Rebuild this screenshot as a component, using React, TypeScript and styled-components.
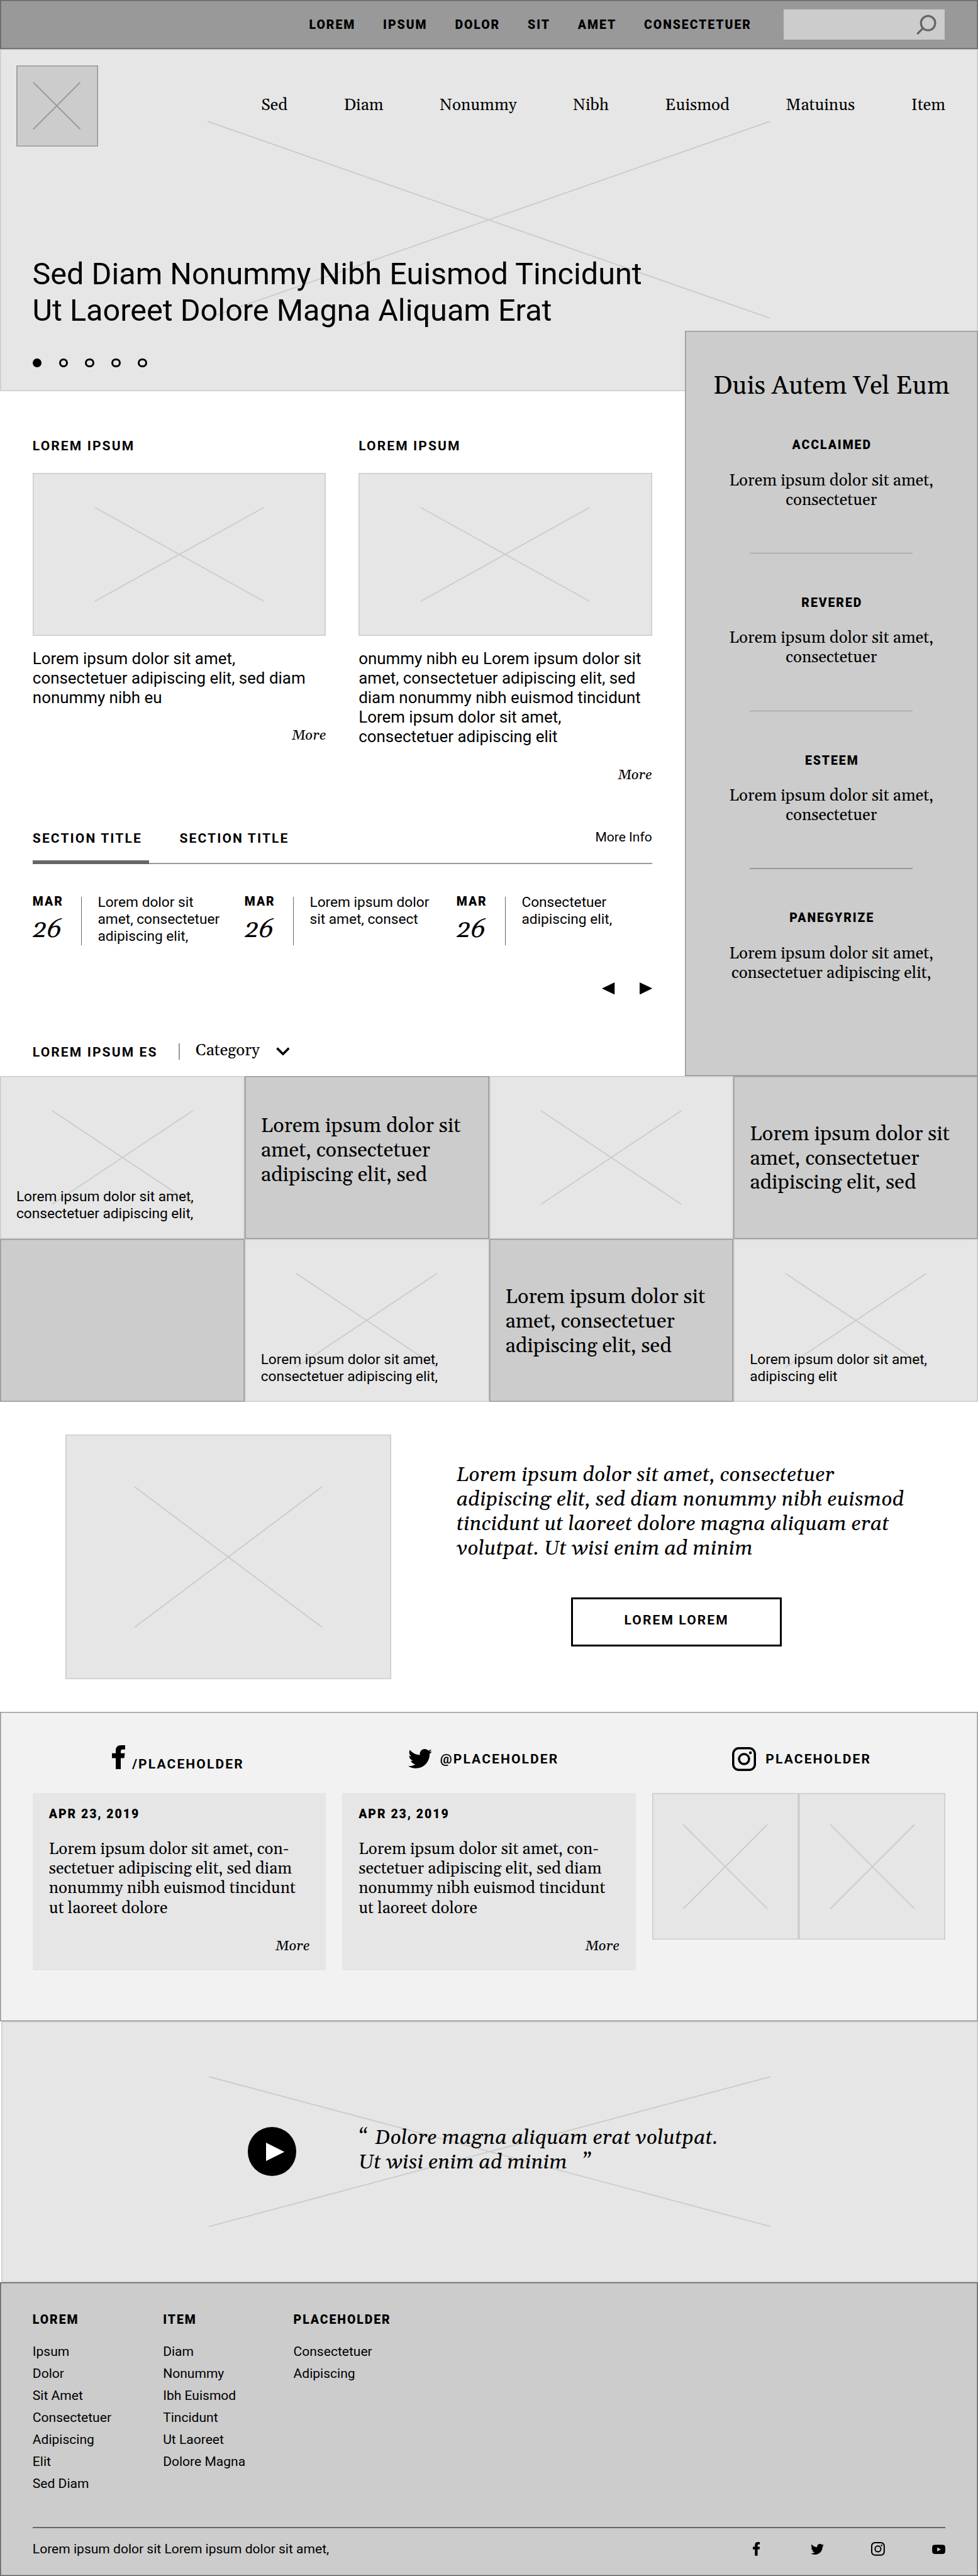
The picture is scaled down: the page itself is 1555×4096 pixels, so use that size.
import React from 'react';
import styled, { createGlobalStyle, css } from 'styled-components';

/* The design is drawn on a 1920 grid; u() converts grid units to screen pixels. */
const SCALE = 0.81;
const u = (n: number) => `${+(n * SCALE).toFixed(2)}px`;

const sans = 'Roboto, "Liberation Sans", sans-serif';
const serif = 'Gelasio, Georgia, "Liberation Serif", serif';

const c = {
  ink: '#000',
  dark: '#666',
  mid: '#999',
  gray: '#ccc',
  light: '#e6e6e6',
  pale: '#f2f2f2',
};

const GlobalStyle = createGlobalStyle`
  *, *::before, *::after { box-sizing: border-box; }
  body { margin: 0; background: #fff; color: ${c.ink}; }
  p, h1, h2, h3, ul { margin: 0; padding: 0; font-weight: normal; }
  ul { list-style: none; }
`;

const edge = (color: string) => css`
  box-shadow: inset 0 0 0 ${u(2)} ${color};
`;

/* ---------- shared type ---------- */

const Label = styled.h3`
  height: ${u(28)};
  padding-top: ${u(1.2)};
  font: 900 ${u(24)} / ${u(28)} ${sans};
  letter-spacing: 0.1em;
  white-space: nowrap;
`;

const Heading = styled.h2`
  font: 700 ${u(26)} / ${u(30)} ${sans};
  letter-spacing: 0.1em;
  white-space: nowrap;
`;

const SerifText = styled.p`
  padding-top: ${u(2)};
  font: ${u(32)} / ${u(38.4)} ${serif};
  white-space: nowrap;
`;

const SmallText = styled.p`
  font: ${u(28)} / ${u(33.6)} ${sans};
  white-space: nowrap;
`;

const More = styled.a`
  display: block;
  margin-top: ${u(38.4)};
  font: italic ${u(28)} / ${u(34)} ${serif};
  text-align: right;
`;

const Lines = ({ of }: { of: string[] }) => (
  <>
    {of.map((line, i) => (
      <React.Fragment key={i}>
        {i > 0 && <br />}
        {line}
      </React.Fragment>
    ))}
  </>
);

/* ---------- image placeholder ---------- */

const CrossSvg = styled.svg`
  position: absolute;
  left: 21.25%;
  top: 21.25%;
  width: 57.5%;
  height: 57.5%;
  overflow: visible;
`;

const Cross = ({ color = c.gray }: { color?: string }) => (
  <CrossSvg viewBox="0 0 100 100" preserveAspectRatio="none" aria-hidden>
    <path
      d="M0 0L100 100M100 0L0 100"
      fill="none"
      stroke={color}
      strokeWidth={1.9}
      vectorEffect="non-scaling-stroke"
    />
  </CrossSvg>
);

const Picture = styled.div<{ $w: number; $h: number }>`
  position: relative;
  flex: none;
  width: ${p => u(p.$w)};
  height: ${p => u(p.$h)};
  background: ${c.light};
  ${edge(c.gray)}
`;

/* ---------- page ---------- */

const Page = styled.div`
  width: 1555px;
  height: 4096px;
  overflow: hidden;
  display: flex;
  flex-direction: column;
`;

const TopBar = styled.div`
  flex: none;
  height: ${u(96)};
  display: flex;
  align-items: center;
  justify-content: flex-end;
  gap: ${u(54.2)};
  padding: 0 ${u(66)} 0 0;
  background: ${c.mid};
  ${edge(c.dark)}
`;

const SearchBox = styled.div`
  display: flex;
  justify-content: flex-end;
  margin-left: ${u(8.5)};
  width: ${u(316)};
  height: ${u(60)};
  padding: ${u(10)} ${u(15)};
  background: ${c.gray};
`;

const Hero = styled.header`
  position: relative;
  flex: none;
  height: ${u(672)};
  background: ${c.light};
  ${edge(c.gray)}
`;

const HeroHead = styled.div`
  position: relative;
  display: flex;
  justify-content: space-between;
  padding: ${u(32)} ${u(64)} 0 ${u(32)};
`;

const Logo = styled.div`
  position: relative;
  width: ${u(160)};
  height: ${u(160)};
  background: ${c.gray};
  ${edge(c.mid)}
`;

const Nav = styled.nav`
  display: flex;
  gap: ${u(110.5)};
  padding-top: ${u(61)};
  font: ${u(32)} / ${u(38)} ${serif};
`;

const HeroTitle = styled.h1`
  position: relative;
  margin: ${u(214)} 0 0 ${u(63.5)};
  font: ${u(60)} / ${u(72)} ${sans};
`;

const Dots = styled.div`
  position: relative;
  display: flex;
  gap: ${u(33.6)};
  margin: ${u(57.5)} 0 0 ${u(64)};
`;

const Dot = styled.span<{ $on?: boolean }>`
  width: ${u(18)};
  height: ${u(18)};
  border: 3px solid ${c.ink};
  border-radius: 50%;
  background: ${p => (p.$on ? c.ink : 'transparent')};
`;

const Body = styled.div`
  flex: none;
  display: flex;
  height: ${u(1344)};
`;

const Main = styled.main`
  width: ${u(1344)};
  padding: 0 ${u(64)};
`;

const Aside = styled.aside`
  position: relative;
  flex: 1;
  margin-top: ${u(-118)};
  padding-top: ${u(79.8)};
  display: flex;
  flex-direction: column;
  align-items: center;
  text-align: center;
  background: ${c.gray};
  ${edge(c.mid)}
`;

const AsideTitle = styled.h2`
  margin-bottom: ${u(71.7)};
  font: ${u(50)} / ${u(58)} ${serif};
  white-space: nowrap;
`;

const Praise = styled.section`
  & > ${Label} {
    padding-left: 0.1em;
    margin-bottom: ${u(34.8)};
  }
  &:not(:last-child)::after {
    content: '';
    display: block;
    width: ${u(320)};
    height: ${u(2)};
    margin: ${u(84)} auto ${u(82)};
    background: ${c.mid};
  }
`;

const Articles = styled.div`
  display: flex;
  gap: ${u(64)};
  padding-top: ${u(92)};
  height: ${u(863)};
`;

const Article = styled.article`
  width: ${u(576)};
  & > ${Heading} {
    margin-bottom: ${u(38)};
  }
`;

const ArticleText = styled.p`
  margin-top: ${u(26.2)};
  font: ${u(32)} / ${u(38.4)} ${sans};
  white-space: nowrap;
`;

const Tabs = styled.div`
  display: flex;
  height: ${u(65)};
  border-bottom: 2px solid ${c.mid};
`;

const Tab = styled(Heading)<{ $active?: boolean }>`
  width: ${u(228)};
  margin: 0 ${u(60.5)} -2px 0;
  border-bottom: ${u(8)} solid ${p => (p.$active ? c.dark : 'transparent')};
`;

const TabLink = styled.a`
  margin: ${u(-3)} 0 0 auto;
  font: ${u(26)} / ${u(30)} ${sans};
`;

const Events = styled.div`
  display: grid;
  grid-template-columns: repeat(3, ${u(416)});
  height: ${u(102)};
  margin-top: ${u(58)};
`;

const Event = styled.div`
  display: flex;
`;

const EventDate = styled.div`
  width: ${u(95)};
  padding-top: ${u(2)};
`;

const Day = styled.div`
  width: ${u(60)};
  margin-top: ${u(12)};
  font: italic ${u(50)} / ${u(58)} ${serif};
  transform: skewX(-8deg);
`;

const Rule = styled.span<{ $color: string; $h: number }>`
  flex: none;
  width: ${u(2)};
  height: ${p => u(p.$h)};
  background: ${p => p.$color};
`;

const EventRule = styled(Rule)`
  margin: ${u(6)} ${u(31)} 0 0;
`;

const Pager = styled.div`
  display: flex;
  justify-content: flex-end;
  gap: ${u(48)};
  margin-top: ${u(72)};
`;

const Filter = styled.div`
  display: flex;
  align-items: center;
  height: ${u(32)};
  margin-top: ${u(96)};
  & > ${Heading} {
    width: ${u(287)};
    padding-top: ${u(2.5)};
  }
  & > ${SerifText} {
    margin: ${u(-4)} ${u(32)} 0 ${u(31)};
  }
`;

const TileGrid = styled.div`
  flex: none;
  display: grid;
  grid-template-columns: repeat(4, 1fr);
  grid-auto-rows: ${u(320)};
`;

const PhotoTile = styled.div`
  position: relative;
  display: flex;
  align-items: flex-end;
  padding: ${u(33)} ${u(32)};
  background: ${c.light};
  ${edge(c.gray)}
  & > p {
    position: relative;
  }
`;

const QuoteTile = styled.div<{ $lift?: number }>`
  display: flex;
  align-items: center;
  padding: ${u(6.8)} ${u(32)} ${p => u((p.$lift ?? 0) * 2)};
  font: ${u(40)} / ${u(48)} ${serif};
  background: ${c.gray};
  white-space: nowrap;
  ${edge(c.mid)}
`;

const Promo = styled.section`
  flex: none;
  display: flex;
  gap: ${u(128)};
  height: ${u(608)};
  padding: ${u(64)} ${u(128)};
`;

const PromoCopy = styled.div`
  width: ${u(864)};
  padding-top: ${u(57.4)};
`;

const BigItalic = styled.p`
  font: italic ${u(40)} / ${u(48)} ${serif};
  white-space: nowrap;
`;

const Button = styled.button`
  display: block;
  width: ${u(414)};
  height: ${u(96)};
  margin: ${u(70.6)} auto 0;
  padding: 0 0 ${u(7)};
  border: 3px solid ${c.ink};
  background: #fff;
  color: ${c.ink};
  font: 700 ${u(26)} / ${u(30)} ${sans};
  letter-spacing: 0.1em;
`;

const Social = styled.section`
  flex: none;
  display: grid;
  grid-template-columns: repeat(3, ${u(576)});
  column-gap: ${u(32)};
  align-items: start;
  height: ${u(608)};
  padding: 0 ${u(64)};
  background: ${c.pale};
  ${edge(c.mid)}
`;

const SocialHead = styled.div<{ $indent: number; $gap: number }>`
  display: flex;
  align-items: center;
  gap: ${p => u(p.$gap)};
  height: ${u(66)};
  margin: ${u(60)} 0 ${u(34)};
  padding-left: ${p => u(p.$indent)};
`;

const LowHeading = styled(Heading)`
  margin-top: ${u(21)};
`;

const RaisedIcon = styled.span`
  display: flex;
  margin-bottom: ${u(7)};
`;

const Card = styled.div<{ $drop?: number }>`
  height: ${u(348)};
  margin-top: ${p => u(p.$drop ?? 0)};
  padding: ${u(27.6)} ${u(32)} 0;
  background: ${c.light};
  & > ${Label} {
    margin-bottom: ${u(34)};
  }
`;

const Photos = styled.div`
  display: flex;
`;

const Video = styled.section`
  position: relative;
  flex: none;
  display: flex;
  gap: ${u(121.5)};
  height: ${u(512)};
  margin-left: ${u(2)};
  padding: ${u(208)} 0 0 ${u(484)};
  background: ${c.light};
  ${edge(c.gray)}
  & > ${BigItalic} {
    position: relative;
    margin-top: ${u(-1.6)};
  }
`;

const Play = styled.span`
  position: relative;
  display: flex;
  align-items: center;
  justify-content: center;
  width: ${u(96)};
  height: ${u(96)};
  padding-left: ${u(12)};
  border-radius: 50%;
  background: ${c.ink};
`;

const OpenQuote = styled.span`
  display: inline-block;
  width: ${u(32.5)};
`;

const CloseQuote = styled.span`
  margin-left: ${u(29)};
`;

const Footer = styled.footer`
  flex: 1;
  padding: ${u(59.4)} ${u(64)} 0;
  background: ${c.gray};
  ${edge(c.dark)}
`;

const FooterColumns = styled.div`
  display: grid;
  grid-template-columns: repeat(3, ${u(256)});
  height: ${u(421)};
`;

const FooterList = styled.ul`
  margin-top: ${u(28)};
  font: ${u(26)} / ${u(43.2)} ${sans};
`;

const FooterBase = styled.div`
  display: flex;
  align-items: center;
  justify-content: space-between;
  border-top: 2px solid ${c.dark};
  height: ${u(88)};
  padding-bottom: ${u(3)};
  font: ${u(26)} / ${u(30)} ${sans};
`;

const FooterIcons = styled.div`
  display: flex;
  align-items: center;
  gap: ${u(93)};
  & > :first-child {
    margin-right: ${u(6)};
  }
`;

/* ---------- icons ---------- */

type IconProps = { w: number; h: number };
const px = (n: number) => +(n * SCALE).toFixed(2);

const SearchIcon = () => (
  <svg width={px(40)} height={px(40)} viewBox="0 0 40 40" fill="none" stroke={c.dark} strokeWidth={4}>
    <circle cx="23" cy="17" r="14" />
    <path d="M13 27L1.6 38.6" />
  </svg>
);

const FacebookIcon = ({ w, h }: IconProps) => (
  <svg width={px(w)} height={px(h)} viewBox="0 0 42 80" preserveAspectRatio="none">
    <path d="M12 80V43H0V27H12V18C12 6 18 0 29 0H42V14H34C29 14 28 17 28 21V27H41L39 43H28V80Z" />
  </svg>
);

const TwitterIcon = ({ w, h }: IconProps) => (
  <svg width={px(w)} height={px(h)} viewBox="0 48 512 416">
    <path d="M459.37 151.716c.325 4.548.325 9.097.325 13.645 0 138.72-105.583 298.558-298.558 298.558-59.452 0-114.68-17.219-161.137-47.106 8.447.974 16.568 1.299 25.34 1.299 49.055 0 94.213-16.568 130.274-44.832-46.132-.975-84.792-31.188-98.112-72.772 6.498.974 12.995 1.624 19.818 1.624 9.421 0 18.843-1.3 27.614-3.573-48.081-9.747-84.143-51.98-84.143-102.985v-1.299c13.969 7.797 30.214 12.67 47.431 13.319-28.264-18.843-46.781-51.005-46.781-87.391 0-19.492 5.197-37.36 14.294-52.954 51.655 63.675 129.3 105.258 216.365 109.807-1.624-7.797-2.599-15.918-2.599-24.04 0-57.828 46.782-104.934 104.934-104.934 30.213 0 57.502 12.67 76.67 33.137 23.715-4.548 46.456-13.32 66.599-25.34-7.798 24.366-24.366 44.833-46.132 57.827 21.117-2.273 41.584-8.122 60.426-16.243-14.292 20.791-32.161 39.308-52.628 54.253z" />
  </svg>
);

const InstagramIcon = ({ w, h }: IconProps) => (
  <svg width={px(w)} height={px(h)} viewBox="0 0 80 80" fill="none" stroke={c.ink} strokeWidth={7.4}>
    <rect x="3.7" y="3.7" width="72.6" height="72.6" rx="19" />
    <circle cx="40" cy="40" r="16.8" />
    <circle cx="61.2" cy="19" r="4.8" fill={c.ink} stroke="none" />
  </svg>
);

const YoutubeIcon = ({ w, h }: IconProps) => (
  <svg width={px(w)} height={px(h)} viewBox="0 0 78 56">
    <path
      fillRule="evenodd"
      d="M11 1.5Q39 -1 67 1.5Q75.500 2.500 76.500 10Q79 28 76.500 46Q75.500 53.500 67 54.500Q39 57 11 54.500Q2.500 53.500 1.500 46Q-1 28 1.500 10Q2.500 2.500 11 1.500ZM30 16V40L52 28Z"
    />
  </svg>
);

const Triangle = ({ dir, w, h, color = c.ink }: IconProps & { dir: 'left' | 'right'; color?: string }) => (
  <svg width={px(w)} height={px(h)} viewBox="0 0 10 10" preserveAspectRatio="none" fill={color}>
    <path d={dir === 'left' ? 'M10 0V10L0 5Z' : 'M0 0V10L10 5Z'} />
  </svg>
);

const Chevron = () => (
  <svg width={px(27)} height={px(17)} viewBox="0 0 27 17" fill="none" stroke={c.ink} strokeWidth={4.4}>
    <path d="M1.8 2L13.500 13.500L25.200 2" />
  </svg>
);

/* ---------- content ---------- */

const topLinks = ['LOREM', 'IPSUM', 'DOLOR', 'SIT', 'AMET', 'CONSECTETUER'];
const navLinks = ['Sed', 'Diam', 'Nonummy', 'Nibh', 'Euismod', 'Matuinus', 'Item'];

const praise = [
  { title: 'ACCLAIMED', text: ['Lorem ipsum dolor sit amet,', 'consectetuer'] },
  { title: 'REVERED', text: ['Lorem ipsum dolor sit amet,', 'consectetuer'] },
  { title: 'ESTEEM', text: ['Lorem ipsum dolor sit amet,', 'consectetuer'] },
  { title: 'PANEGYRIZE', text: ['Lorem ipsum dolor sit amet,', 'consectetuer adipiscing elit,'] },
];

const articles = [
  ['Lorem ipsum dolor sit amet,', 'consectetuer adipiscing elit, sed diam', 'nonummy nibh eu'],
  [
    'onummy nibh eu Lorem ipsum dolor sit',
    'amet, consectetuer adipiscing elit, sed',
    'diam nonummy nibh euismod tincidunt',
    'Lorem ipsum dolor sit amet,',
    'consectetuer adipiscing elit',
  ],
];

const events = [
  ['Lorem dolor sit', 'amet, consectetuer', 'adipiscing elit,'],
  ['Lorem ipsum dolor', 'sit amet, consect'],
  ['Consectetuer', 'adipiscing elit,'],
];

const caption = ['Lorem ipsum dolor sit amet,', 'consectetuer adipiscing elit,'];
const quote = ['Lorem ipsum dolor sit', 'amet, consectetuer', 'adipiscing elit, sed'];

const tiles: { kind: 'photo' | 'quote'; text?: string[]; lift?: number }[] = [
  { kind: 'photo', text: caption },
  { kind: 'quote', text: quote, lift: 15.5 },
  { kind: 'photo' },
  { kind: 'quote', text: quote },
  { kind: 'quote' },
  { kind: 'photo', text: caption },
  { kind: 'quote', text: quote },
  { kind: 'photo', text: ['Lorem ipsum dolor sit amet,', 'adipiscing elit'] },
];

const post = [
  'Lorem ipsum dolor sit amet, con-',
  'sectetuer adipiscing elit, sed diam',
  'nonummy nibh euismod tincidunt',
  'ut laoreet dolore',
];

const footerColumns = [
  { title: 'LOREM', items: ['Ipsum', 'Dolor', 'Sit Amet', 'Consectetuer', 'Adipiscing', 'Elit', 'Sed Diam'] },
  { title: 'ITEM', items: ['Diam', 'Nonummy', 'Ibh Euismod', 'Tincidunt', 'Ut Laoreet', 'Dolore Magna'] },
  { title: 'PLACEHOLDER', items: ['Consectetuer', 'Adipiscing'] },
];

const PostCard = ({ drop }: { drop?: number }) => (
  <Card $drop={drop}>
    <Label>APR 23, 2019</Label>
    <SerifText>
      <Lines of={post} />
    </SerifText>
    <More>More</More>
  </Card>
);

export default function App() {
  return (
    <Page>
      <GlobalStyle />

      <TopBar>
        {topLinks.map(t => (
          <Label key={t}>{t}</Label>
        ))}
        <SearchBox>
          <SearchIcon />
        </SearchBox>
      </TopBar>

      <Hero>
        <Cross />
        <HeroHead>
          <Logo>
            <Cross color={c.mid} />
          </Logo>
          <Nav>
            {navLinks.map(t => (
              <span key={t}>{t}</span>
            ))}
          </Nav>
        </HeroHead>
        <HeroTitle>
          <Lines of={['Sed Diam Nonummy Nibh Euismod Tincidunt', 'Ut Laoreet Dolore Magna Aliquam Erat']} />
        </HeroTitle>
        <Dots>
          {[0, 1, 2, 3, 4].map(i => (
            <Dot key={i} $on={i === 0} />
          ))}
        </Dots>
      </Hero>

      <Body>
        <Main>
          <Articles>
            {articles.map((text, i) => (
              <Article key={i}>
                <Heading>LOREM IPSUM</Heading>
                <Picture $w={576} $h={320}>
                  <Cross />
                </Picture>
                <ArticleText>
                  <Lines of={text} />
                </ArticleText>
                <More>More</More>
              </Article>
            ))}
          </Articles>

          <Tabs>
            <Tab $active>SECTION TITLE</Tab>
            <Tab>SECTION TITLE</Tab>
            <TabLink>More Info</TabLink>
          </Tabs>

          <Events>
            {events.map((text, i) => (
              <Event key={i}>
                <EventDate>
                  <Label>MAR</Label>
                  <Day>26</Day>
                </EventDate>
                <EventRule $color={c.dark} $h={96} />
                <SmallText>
                  <Lines of={text} />
                </SmallText>
              </Event>
            ))}
          </Events>

          <Pager>
            <Triangle dir="left" w={25} h={24} />
            <Triangle dir="right" w={25} h={24} />
          </Pager>

          <Filter>
            <Heading>LOREM IPSUM ES</Heading>
            <Rule $color={c.mid} $h={32} />
            <SerifText>Category</SerifText>
            <Chevron />
          </Filter>
        </Main>

        <Aside>
          <AsideTitle>Duis Autem Vel Eum</AsideTitle>
          {praise.map(p => (
            <Praise key={p.title}>
              <Label>{p.title}</Label>
              <SerifText>
                <Lines of={p.text} />
              </SerifText>
            </Praise>
          ))}
        </Aside>
      </Body>

      <TileGrid>
        {tiles.map((t, i) =>
          t.kind === 'photo' ? (
            <PhotoTile key={i}>
              <Cross />
              {t.text && (
                <SmallText>
                  <Lines of={t.text} />
                </SmallText>
              )}
            </PhotoTile>
          ) : (
            <QuoteTile key={i} $lift={t.lift}>
              {t.text && (
                <p>
                  <Lines of={t.text} />
                </p>
              )}
            </QuoteTile>
          ),
        )}
      </TileGrid>

      <Promo>
        <Picture $w={640} $h={480}>
          <Cross />
        </Picture>
        <PromoCopy>
          <BigItalic>
            <Lines
              of={[
                'Lorem ipsum dolor sit amet, consectetuer',
                'adipiscing elit, sed diam nonummy nibh euismod',
                'tincidunt ut laoreet dolore magna aliquam erat',
                'volutpat. Ut wisi enim ad minim',
              ]}
            />
          </BigItalic>
          <Button>LOREM LOREM</Button>
        </PromoCopy>
      </Promo>

      <Social>
        <div>
          <SocialHead $indent={156} $gap={13.5}>
            <RaisedIcon>
              <FacebookIcon w={26} h={47} />
            </RaisedIcon>
            <LowHeading>/PLACEHOLDER</LowHeading>
          </SocialHead>
          <PostCard />
        </div>
        <div>
          <SocialHead $indent={129} $gap={16}>
            <TwitterIcon w={47} h={38} />
            <Heading>@PLACEHOLDER</Heading>
          </SocialHead>
          <PostCard drop={2} />
        </div>
        <div>
          <SocialHead $indent={157} $gap={19}>
            <InstagramIcon w={47} h={47} />
            <Heading>PLACEHOLDER</Heading>
          </SocialHead>
          <Photos>
            <Picture $w={288} $h={288}>
              <Cross />
            </Picture>
            <Picture $w={288} $h={288}>
              <Cross />
            </Picture>
          </Photos>
        </div>
      </Social>

      <Video>
        <Cross />
        <Play>
          <Triangle dir="right" w={36} h={36} color="#fff" />
        </Play>
        <BigItalic>
          <OpenQuote>“</OpenQuote>Dolore magna aliquam erat volutpat.
          <br />
          Ut wisi enim ad minim<CloseQuote>”</CloseQuote>
        </BigItalic>
      </Video>

      <Footer>
        <FooterColumns>
          {footerColumns.map(col => (
            <div key={col.title}>
              <Label>{col.title}</Label>
              <FooterList>
                {col.items.map(item => (
                  <li key={item}>{item}</li>
                ))}
              </FooterList>
            </div>
          ))}
        </FooterColumns>
        <FooterBase>
          <span>Lorem ipsum dolor sit Lorem ipsum dolor sit amet,</span>
          <FooterIcons>
            <FacebookIcon w={14} h={27} />
            <TwitterIcon w={26} h={21} />
            <InstagramIcon w={27} h={27} />
            <YoutubeIcon w={26} h={19} />
          </FooterIcons>
        </FooterBase>
      </Footer>
    </Page>
  );
}
